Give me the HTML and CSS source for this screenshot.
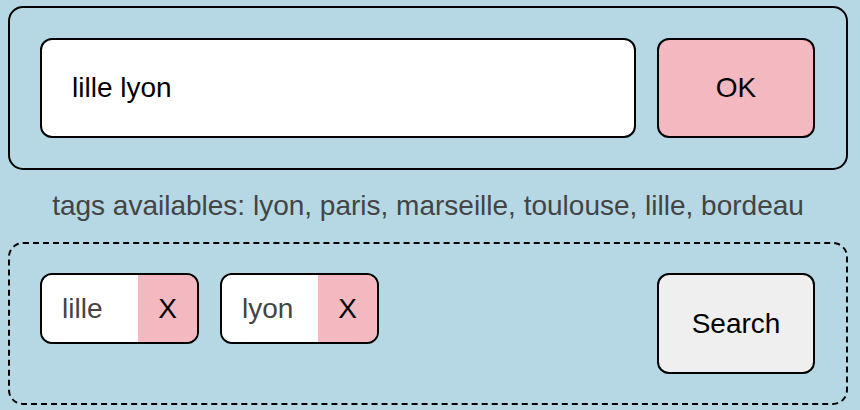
FILE: index.html
```html
<!DOCTYPE html>
<html>
<head>
<meta charset="utf-8">
<link rel="stylesheet" href="styles.css">
</head>
<body>
<div class="app">
  <div class="entry">
    <div class="input">lille lyon</div>
    <button class="ok">OK</button>
  </div>
  <p class="hint">tags availables: lyon, paris, marseille, toulouse, lille, bordeau</p>
  <div class="tags-box">
    <div class="tags">
      <div class="tag"><span class="tag-name">lille</span><span class="tag-x">X</span></div>
      <div class="tag"><span class="tag-name">lyon</span><span class="tag-x">X</span></div>
    </div>
    <button class="search">Search</button>
  </div>
</div>
</body>
</html>
```
FILE: styles.css
```css
html, body {
  margin: 0;
  background: #b5d8e4;
}
body {
  padding: 6px 12px 0 8px;
  font-family: "Liberation Sans", Arial, sans-serif;
}
.app {
  width: 840px;
}
.entry {
  display: flex;
  gap: 21px;
  border: 2px solid #000;
  border-radius: 15px;
  padding: 30px 31px 30px 30px;
}
.input {
  width: 596px;
  height: 100px;
  box-sizing: border-box;
  background: #fff;
  border: 2px solid #000;
  border-radius: 12px;
  padding-left: 30px;
  display: flex;
  align-items: center;
  font-size: 28px;
  color: #000;
}
.ok {
  width: 158px;
  height: 100px;
  box-sizing: border-box;
  background: #f4b8c1;
  border: 2px solid #000;
  border-radius: 12px;
  font-family: inherit;
  font-size: 28px;
  color: #000;
  padding: 0;
}
.hint {
  margin: 0;
  height: 72px;
  display: flex;
  align-items: center;
  justify-content: center;
  font-size: 28px;
  color: #444;
}
.tags-box {
  display: flex;
  justify-content: space-between;
  align-items: flex-start;
  border: 2px dashed #000;
  border-radius: 15px;
  padding: 29px 31px 29px 30px;
  height: 101px;
}
.tags {
  display: flex;
  gap: 21px;
}
.tag {
  display: flex;
  width: 159px;
  height: 71px;
  box-sizing: border-box;
  border: 2px solid #000;
  border-radius: 12px;
  overflow: hidden;
  font-size: 28px;
}
.tag-name {
  flex: 1;
  background: #fff;
  color: #444;
  display: flex;
  align-items: center;
  padding-left: 20px;
}
.tag-x {
  width: 59px;
  background: #f4b8c1;
  color: #000;
  display: flex;
  align-items: center;
  justify-content: center;
}
.search {
  width: 158px;
  height: 101px;
  box-sizing: border-box;
  background: #efefef;
  border: 2px solid #000;
  border-radius: 12px;
  font-family: inherit;
  font-size: 28px;
  color: #000;
  padding: 0;
}
```
